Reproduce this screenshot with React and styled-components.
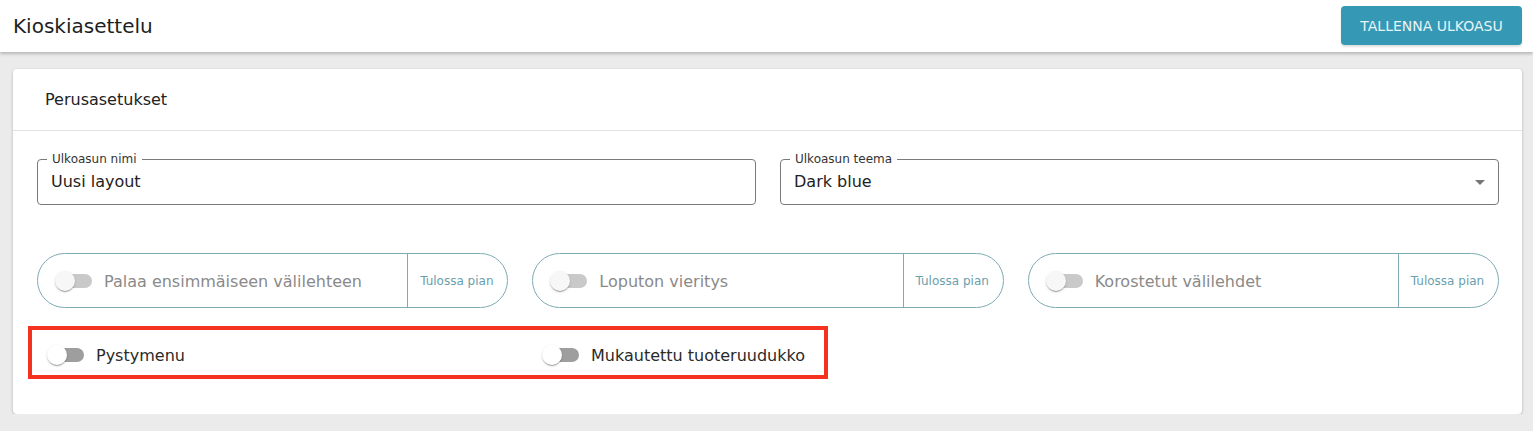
import React from 'react'
import styled, { createGlobalStyle } from 'styled-components'

const GlobalStyle = createGlobalStyle`
  body {
    margin: 0;
    background: #ebebeb;
    font-family: "DejaVu Sans", "Liberation Sans", sans-serif;
    color: #222;
  }
`

const TopBar = styled.header`
  height: 52px;
  background: #fff;
  box-shadow: 0 2px 3px rgba(0, 0, 0, 0.22);
  display: flex;
  align-items: center;
  justify-content: space-between;
  padding: 0 11px 0 13px;
  position: relative;
  z-index: 1;
`

const Title = styled.h1`
  margin: 0;
  font-size: 20px;
  font-weight: 400;
  color: #1e1e1e;
`

const SaveButton = styled.button`
  width: 181px;
  height: 39px;
  border: none;
  border-radius: 4px;
  background: #3598b5;
  color: #e8f4f7;
  font-family: inherit;
  font-size: 14px;
  text-transform: uppercase;
  box-shadow: 0 2px 2px rgba(0, 0, 0, 0.12);
  margin-top: -1px;
`

const Main = styled.main`
  padding: 17px 11px 0 13px;
`

const Card = styled.section`
  background: #fff;
  border-radius: 4px;
  box-shadow: 0 1px 3px rgba(0, 0, 0, 0.25);
`

const CardHeader = styled.div`
  height: 61px;
  display: flex;
  align-items: center;
  padding-left: 32px;
  border-bottom: 1px solid #e2e2e2;
  font-size: 16px;
  color: #222;
`

const CardBody = styled.div`
  padding: 21px 23px 35px 24px;
`

const FieldRow = styled.div`
  display: grid;
  grid-template-columns: 1fr 1fr;
  column-gap: 24px;
`

const Field = styled.fieldset`
  margin: 0;
  min-width: 0;
  border: 1px solid #7a7a7a;
  border-radius: 4px;
  padding: 0 13px;
  height: 53px;
  box-sizing: border-box;
  display: flex;
  align-items: center;
  justify-content: space-between;
`

const Legend = styled.legend`
  font-size: 12px;
  line-height: 14px;
  padding: 0 5px;
  margin-left: -4px;
  color: #333;
`

const FieldValue = styled.span`
  font-size: 16px;
  color: #222;
  margin-top: -7px;
`

const Caret = styled.svg`
  width: 24px;
  height: 24px;
  fill: #757575;
  margin: -7px -7px 0 0;
`

const PillRow = styled.div`
  display: grid;
  grid-template-columns: repeat(3, 1fr);
  column-gap: 24px;
  margin-top: 48px;
`

const Pill = styled.div`
  height: 55px;
  box-sizing: border-box;
  border: 1px solid #7eabb5;
  border-radius: 28px;
  display: flex;
  overflow: hidden;
`

const PillMain = styled.div`
  flex: 1;
  display: flex;
  align-items: center;
  padding: 1px 0 0 8px;
  font-size: 16px;
  color: #8a8a8a;
`

const PillSide = styled.div`
  width: 100px;
  box-sizing: border-box;
  border-left: 1px solid #7eabb5;
  display: flex;
  align-items: center;
  justify-content: center;
  font-size: 12px;
  color: #6aa0ad;
  padding-right: 2px;
`

const Highlight = styled.div`
  width: 800px;
  box-sizing: border-box;
  margin: 18px 0 0 -9px;
  border: 4px solid #f5321f;
  padding: 6px 0 1px 6px;
  display: grid;
  grid-template-columns: 471px 471px;
  column-gap: 24px;
`

const ToggleLabel = styled.label`
  display: flex;
  align-items: center;
  font-size: 16px;
  color: #2a2a2a;
  white-space: nowrap;
`

const SwitchRoot = styled.span`
  position: relative;
  display: inline-block;
  width: 58px;
  height: 38px;
  flex-shrink: 0;
`

const Track = styled.span`
  position: absolute;
  left: 12px;
  top: 12px;
  width: 34px;
  height: 14px;
  border-radius: 7px;
  background: ${(p) => (p.$disabled ? '#c9c9c9' : '#9e9e9e')};
`

const Thumb = styled.span`
  position: absolute;
  left: 9px;
  top: 9px;
  width: 20px;
  height: 20px;
  border-radius: 50%;
  background: ${(p) => (p.$disabled ? '#f7f7f7' : '#fff')};
  box-shadow: 0 2px 1px -1px rgba(0, 0, 0, 0.2), 0 1px 1px rgba(0, 0, 0, 0.14),
    0 1px 3px rgba(0, 0, 0, 0.12);
`

const Switch = ({ disabled }) => (
  <SwitchRoot>
    <Track $disabled={disabled} />
    <Thumb $disabled={disabled} />
  </SwitchRoot>
)

const comingSoon = ['Palaa ensimmäiseen välilehteen', 'Loputon vieritys', 'Korostetut välilehdet']

export default function App() {
  return (
    <>
      <GlobalStyle />
      <TopBar>
        <Title>Kioskiasettelu</Title>
        <SaveButton>Tallenna ulkoasu</SaveButton>
      </TopBar>
      <Main>
        <Card>
          <CardHeader>Perusasetukset</CardHeader>
          <CardBody>
            <FieldRow>
              <Field>
                <Legend>Ulkoasun nimi</Legend>
                <FieldValue>Uusi layout</FieldValue>
              </Field>
              <Field>
                <Legend>Ulkoasun teema</Legend>
                <FieldValue>Dark blue</FieldValue>
                <Caret viewBox="0 0 24 24">
                  <path d="M7 10l5 5 5-5z" />
                </Caret>
              </Field>
            </FieldRow>

            <PillRow>
              {comingSoon.map((label) => (
                <Pill key={label}>
                  <PillMain>
                    <Switch disabled />
                    {label}
                  </PillMain>
                  <PillSide>Tulossa pian</PillSide>
                </Pill>
              ))}
            </PillRow>

            <Highlight>
              <ToggleLabel>
                <Switch />
                Pystymenu
              </ToggleLabel>
              <ToggleLabel>
                <Switch />
                Mukautettu tuoteruudukko
              </ToggleLabel>
            </Highlight>
          </CardBody>
        </Card>
      </Main>
    </>
  )
}
